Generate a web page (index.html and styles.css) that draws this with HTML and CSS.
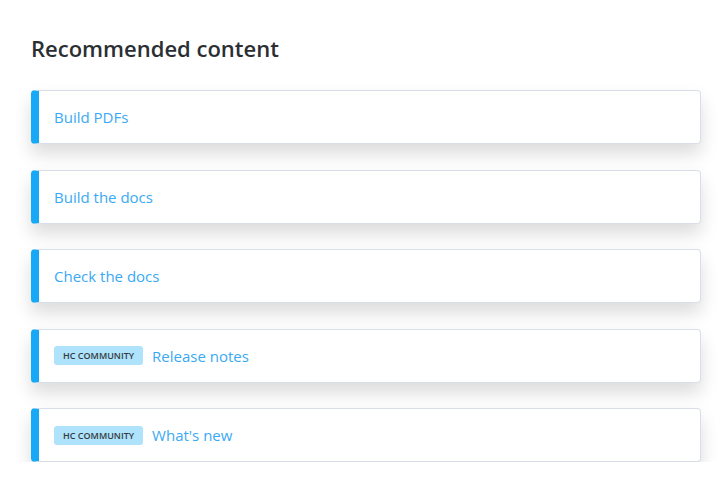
FILE: index.html
```html
<!DOCTYPE html>
<html>
<head>
<meta charset="utf-8">
<link rel="stylesheet" href="styles.css">
</head>
<body>
<section class="rec">
  <h2 class="rec-title">Recommended content</h2>
  <ul class="rec-list">
    <li class="rec-item"><a class="rec-link" href="#">Build PDFs</a></li>
    <li class="rec-item"><a class="rec-link" href="#">Build the docs</a></li>
    <li class="rec-item"><a class="rec-link" href="#">Check the docs</a></li>
    <li class="rec-item"><span class="badge">HC Community</span><a class="rec-link" href="#">Release notes</a></li>
    <li class="rec-item"><span class="badge">HC Community</span><a class="rec-link" href="#">What's new</a></li>
  </ul>
</section>
</body>
</html>
```
FILE: styles.css
```css
html, body {
  margin: 0;
  background: #ffffff;
  font-family: "Open Sans", "Liberation Sans", sans-serif;
}
.rec {
  padding: 33px 26px 0 31px;
}
.rec-title {
  margin: 0 0 26px 0;
  font-size: 22px;
  font-weight: 600;
  color: #2b2f33;
  line-height: 31px;
}
.rec-list {
  list-style: none;
  margin: 0;
  padding: 0;
  display: flex;
  flex-direction: column;
  gap: 25.5px;
}
.rec-item {
  display: flex;
  align-items: center;
  height: 52px;
  padding-left: 15px;
  background: #fff;
  border: 1px solid #d9dee8;
  border-left: 8px solid #18a9f6;
  border-radius: 4px;
  box-shadow: 0 10px 18px rgba(0, 0, 0, 0.14);
}
.rec-link {
  color: #3aa9f4;
  text-decoration: none;
  font-size: 15px;
}
.badge {
  display: inline-flex;
  align-items: center;
  height: 19px;
  padding: 0 9px;
  margin-right: 9px;
  background: #aee3fb;
  border-radius: 3px;
  color: #333a3f;
  font-size: 9px;
  font-weight: 600;
  text-transform: uppercase;
}
```
